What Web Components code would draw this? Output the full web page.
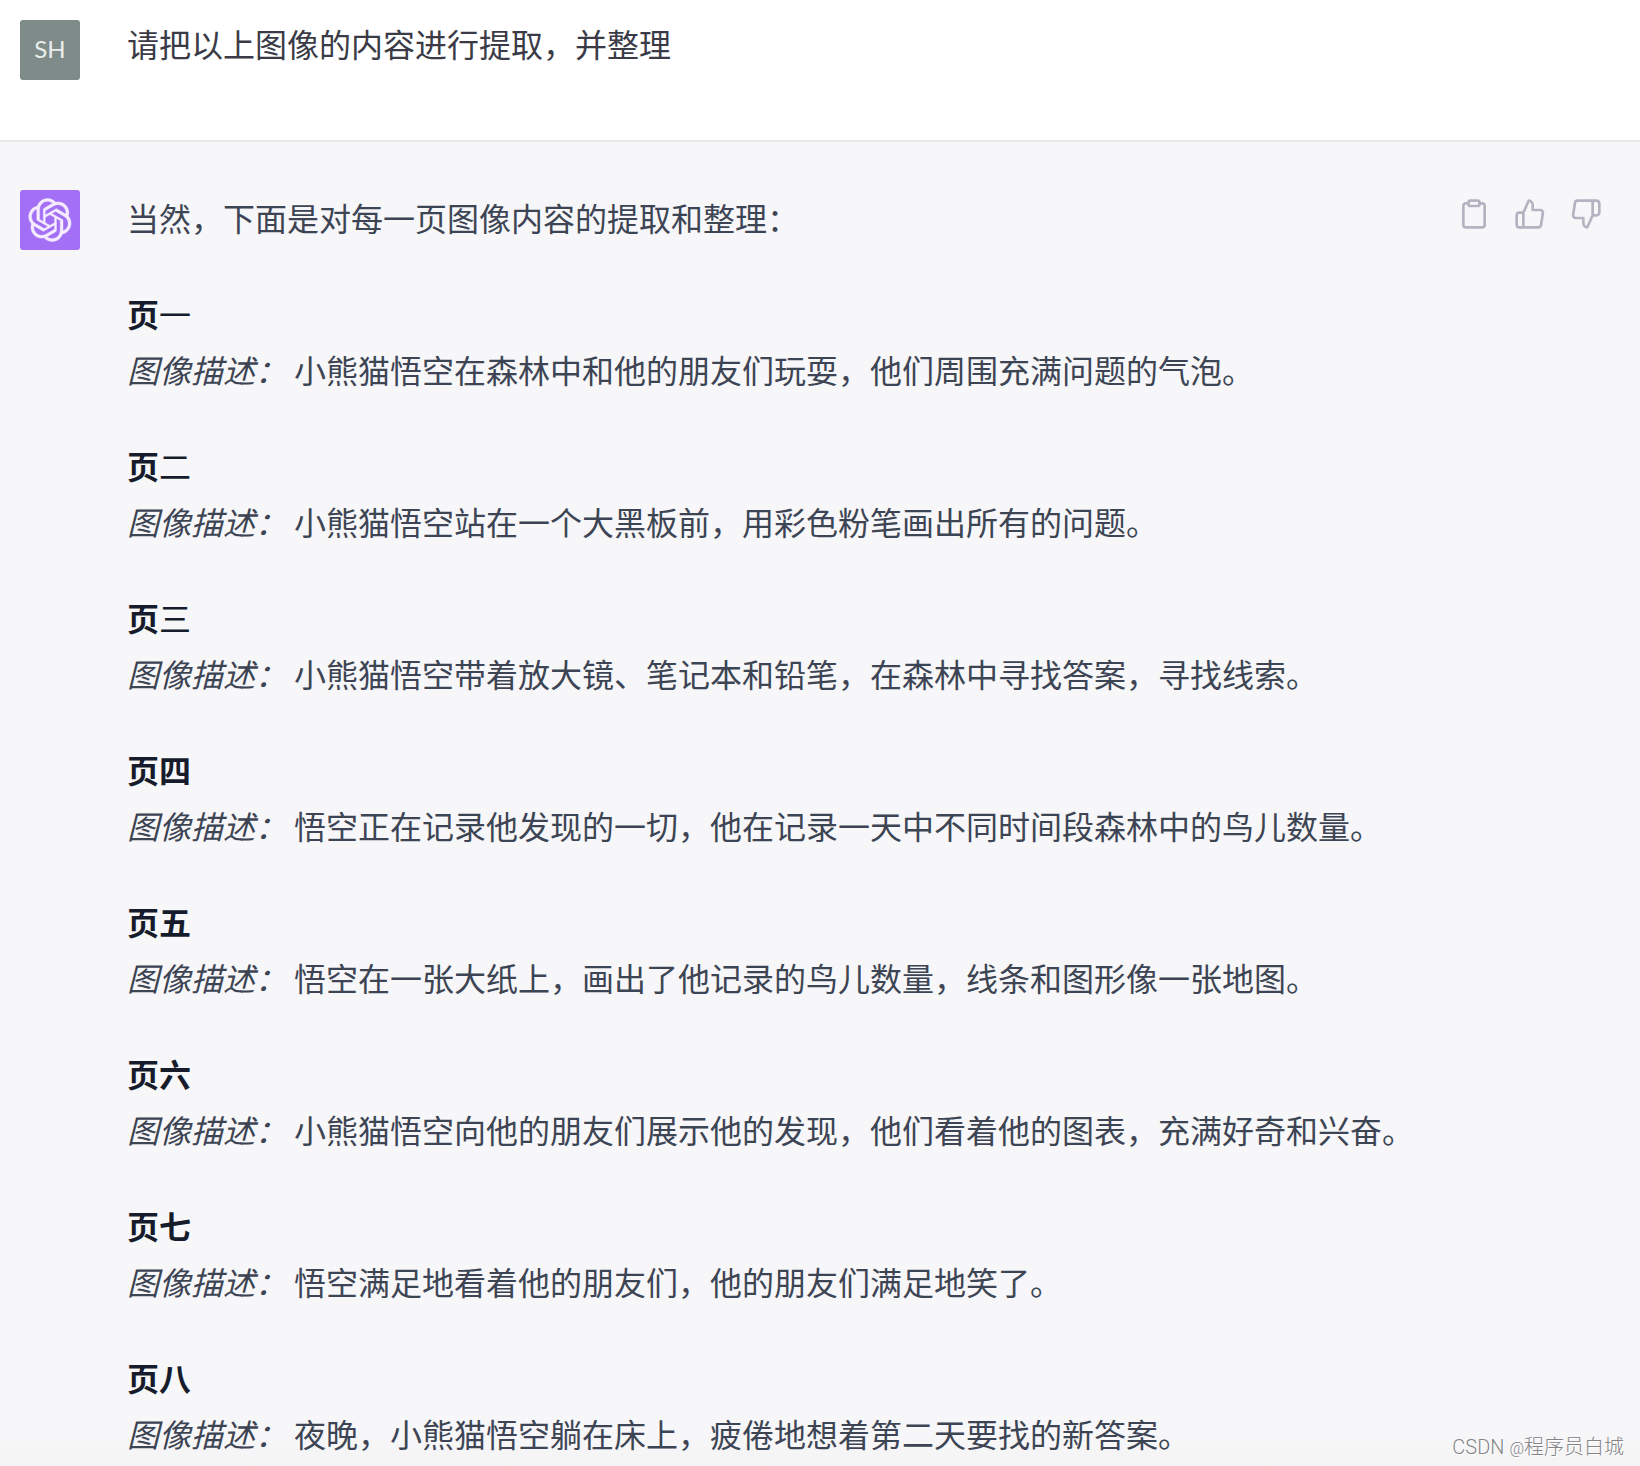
<!DOCTYPE html>
<html lang="zh-CN">
    <head>
        <meta charset="utf-8">
        <meta name="viewport" content="width=device-width, initial-scale=1.0">
        <title>chat thread</title>
        <style>
            html, body {
                margin: 0;
                height: 1466px;
                overflow: hidden;
                background: #f7f7f9;
            }

            body {
                position: relative;
                font-family: "Noto Sans CJK SC", sans-serif;
                font-size: 32px;
                line-height: 56px;
            }
        </style>
    </head>

    <body>
        <chat-message role="user">
            <chat-avatar slot="avatar">SH</chat-avatar>
            请把以上图像的内容进行提取，并整理
        </chat-message>

        <chat-message role="assistant">
            <chat-avatar slot="avatar" bot><chat-icon name="openai"></chat-icon></chat-avatar>
            <div>当然，下面是对每一页图像内容的提取和整理：</div>
            <page-note page="一" thin>小熊猫悟空在森林中和他的朋友们玩耍，他们周围充满问题的气泡。</page-note>
            <page-note page="二" thin>小熊猫悟空站在一个大黑板前，用彩色粉笔画出所有的问题。</page-note>
            <page-note page="三" thin>小熊猫悟空带着放大镜、笔记本和铅笔，在森林中寻找答案，寻找线索。</page-note>
            <page-note page="四">悟空正在记录他发现的一切，他在记录一天中不同时间段森林中的鸟儿数量。</page-note>
            <page-note page="五">悟空在一张大纸上，画出了他记录的鸟儿数量，线条和图形像一张地图。</page-note>
            <page-note page="六">小熊猫悟空向他的朋友们展示他的发现，他们看着他的图表，充满好奇和兴奋。</page-note>
            <page-note page="七">悟空满足地看着他的朋友们，他的朋友们满足地笑了。</page-note>
            <page-note page="八">夜晚，小熊猫悟空躺在床上，疲倦地想着第二天要找的新答案。</page-note>
            <chat-icon slot="actions" name="clipboard"></chat-icon>
            <chat-icon slot="actions" name="up"></chat-icon>
            <chat-icon slot="actions" name="down"></chat-icon>
        </chat-message>

        <water-mark>CSDN <small>@</small>程序员白城</water-mark>
    </body>

    <script>
        const icons = {
            clipboard: `<svg viewBox="0 0 24 24"><path d="M16 4h2a2 2 0 0 1 2 2v14a2 2 0 0 1-2 2H6a2 2 0 0 1-2-2V6a2 2 0 0 1 2-2h2"/><rect x="8" y="2" width="8" height="4" rx="1"/></svg>`,
            up: `<svg viewBox="0 0 24 24"><path d="M14 9V5a3 3 0 0 0-3-3l-4 9v11h11.28a2 2 0 0 0 2-1.7l1.38-9a2 2 0 0 0-2-2.3zM7 22H4a2 2 0 0 1-2-2v-7a2 2 0 0 1 2-2h3"/></svg>`,
            down: `<svg viewBox="0 0 24 24"><path d="M10 15v4a3 3 0 0 0 3 3l4-9V2H5.72a2 2 0 0 0-2 1.7l-1.38 9a2 2 0 0 0 2 2.3zm7-13h2.67A2.31 2.31 0 0 1 22 4v7a2.31 2.31 0 0 1-2.33 2H17"/></svg>`,
            openai: `<svg class="fill" viewBox="0 0 41 41"><path d="M37.5324 16.8707C37.9808 15.5241 38.1363 14.0974 37.9886 12.6859C37.8409 11.2744 37.3934 9.91076 36.676 8.68622C35.6126 6.83404 33.9882 5.3676 32.0373 4.4985C30.0864 3.62941 27.9098 3.40259 25.8215 3.85078C24.8796 2.7893 23.7219 1.94125 22.4257 1.36341C21.1295 0.785575 19.7249 0.491269 18.3058 0.500197C16.1708 0.495044 14.0893 1.16803 12.3614 2.42214C10.6335 3.67624 9.34853 5.44666 8.6917 7.47815C7.30085 7.76286 5.98686 8.3414 4.8377 9.17505C3.68854 10.0087 2.73073 11.0782 2.02839 12.312C0.956464 14.1591 0.498905 16.2988 0.721698 18.4228C0.944492 20.5467 1.83612 22.5449 3.268 24.1293C2.81966 25.4759 2.66413 26.9026 2.81182 28.3141C2.95951 29.7256 3.40701 31.0892 4.12437 32.3138C5.18791 34.1659 6.8123 35.6322 8.76321 36.5013C10.7141 37.3704 12.8907 37.5973 14.9789 37.1492C15.9208 38.2107 17.0786 39.0587 18.3747 39.6366C19.6709 40.2144 21.0755 40.5087 22.4946 40.4998C24.6307 40.5054 26.7133 39.8321 28.4418 38.5772C30.1704 37.3223 31.4556 35.5506 32.1119 33.5179C33.5027 33.2332 34.8167 32.6547 35.9659 31.821C37.115 30.9874 38.0728 29.9178 38.7752 28.684C39.8458 26.8371 40.3023 24.6979 40.0789 22.5748C39.8556 20.4517 38.9639 18.4544 37.5324 16.8707ZM22.4978 37.8849C20.7443 37.8874 19.0459 37.2733 17.6994 36.1501C17.7601 36.117 17.8666 36.0586 17.936 36.0161L25.9004 31.4156C26.1003 31.3019 26.2663 31.137 26.3813 30.9378C26.4964 30.7386 26.5563 30.5124 26.5549 30.2825V19.0542L29.9213 20.998C29.9389 21.0068 29.9541 21.0198 29.9656 21.0359C29.977 21.052 29.9842 21.0707 29.9867 21.0902V30.3889C29.9842 32.375 29.1946 34.2791 27.7909 35.6841C26.3872 37.0892 24.4838 37.8806 22.4978 37.8849ZM6.39227 31.0064C5.51397 29.4888 5.19742 27.7107 5.49804 25.9832C5.55718 26.0187 5.66048 26.0818 5.73461 26.1244L13.699 30.7248C13.8975 30.8408 14.1233 30.902 14.3532 30.902C14.583 30.902 14.8088 30.8408 15.0073 30.7248L24.731 25.1103V28.9979C24.7321 29.0177 24.7283 29.0376 24.7199 29.0556C24.7115 29.0736 24.6988 29.0893 24.6829 29.1012L16.6317 33.7497C14.9096 34.7416 12.8643 35.0097 10.9447 34.4954C9.02506 33.9811 7.38785 32.7263 6.39227 31.0064ZM4.29707 13.6194C5.17156 12.0998 6.55279 10.9364 8.19885 10.3327C8.19885 10.4013 8.19491 10.5228 8.19491 10.6071V19.808C8.19351 20.0378 8.25334 20.2638 8.36823 20.4629C8.48312 20.6619 8.64893 20.8267 8.84863 20.9404L18.5723 26.5542L15.206 28.4979C15.1894 28.5089 15.1703 28.5155 15.1505 28.5173C15.1307 28.5191 15.1107 28.516 15.0924 28.5082L7.04046 23.8557C5.32135 22.8601 4.06716 21.2235 3.55289 19.3046C3.03862 17.3858 3.30624 15.3413 4.29707 13.6194ZM31.955 20.0556L22.2312 14.4411L25.5976 12.4981C25.6142 12.4872 25.6333 12.4805 25.6531 12.4787C25.6729 12.4769 25.6928 12.4801 25.7111 12.4879L33.7631 17.1364C34.9967 17.849 36.0017 18.8982 36.6606 20.1613C37.3194 21.4244 37.6047 22.849 37.4832 24.2684C37.3617 25.6878 36.8382 27.0432 35.9743 28.1759C35.1103 29.3086 33.9415 30.1717 32.6047 30.6641C32.6047 30.5947 32.6047 30.4733 32.6047 30.3889V21.188C32.6066 20.9586 32.5474 20.7328 32.4332 20.5338C32.319 20.3348 32.154 20.1698 31.955 20.0556ZM35.3055 15.0128C35.2464 14.9765 35.1431 14.9142 35.069 14.8717L27.1045 10.2712C26.906 10.1554 26.6803 10.0943 26.4504 10.0943C26.2206 10.0943 25.9948 10.1554 25.7963 10.2712L16.0726 15.8858V11.9982C16.0715 11.9783 16.0753 11.9585 16.0837 11.9405C16.0921 11.9225 16.1048 11.9068 16.1207 11.8949L24.1719 7.25025C25.4053 6.53903 26.8158 6.19376 28.2383 6.25482C29.6608 6.31589 31.0364 6.78077 32.2044 7.59508C33.3723 8.40939 34.2842 9.53945 34.8334 10.8531C35.3826 12.1667 35.5464 13.6095 35.3055 15.0128ZM14.2424 21.9419L10.8752 19.9981C10.8576 19.9893 10.8423 19.9763 10.8309 19.9602C10.8195 19.9441 10.8122 19.9254 10.8098 19.9058V10.6071C10.8107 9.18295 11.2173 7.78848 11.9819 6.58696C12.7466 5.38544 13.8377 4.42659 15.1275 3.82264C16.4173 3.21869 17.8524 2.99464 19.2649 3.1767C20.6775 3.35876 22.0089 3.93941 23.1034 4.85067C23.0427 4.88379 22.937 4.94215 22.8668 4.98473L14.9024 9.58517C14.7025 9.69878 14.5366 9.86356 14.4215 10.0626C14.3065 10.2616 14.2466 10.4877 14.2479 10.7175L14.2424 21.9419ZM16.071 17.9991L20.4018 15.4978L24.7325 17.9975V22.9985L20.4018 25.4983L16.071 22.9985V17.9991Z"/></svg>`
        }

        class ChatIcon extends HTMLElement {
            constructor() {
                super()
                this.attachShadow({ mode: 'open' })
                this.shadowRoot.innerHTML = `
                <style>
                    :host { display: block; width: 32px; height: 32px; color: #b4b3c2; }
                    :host([name="openai"]) { width: 44px; height: 44px; color: #f6ecff; }
                    svg {
                        display: block;
                        width: 100%;
                        height: 100%;
                        fill: none;
                        stroke: currentColor;
                        stroke-width: 2;
                        stroke-linecap: round;
                        stroke-linejoin: round;
                    }
                    svg.fill { fill: currentColor; stroke-width: 0.4; }
                </style>
                ${icons[this.getAttribute('name')]}
                `
            }
        }

        class ChatAvatar extends HTMLElement {
            constructor() {
                super()
                this.attachShadow({ mode: 'open' })
                this.shadowRoot.innerHTML = `
                <style>
                    :host {
                        display: flex;
                        align-items: center;
                        justify-content: center;
                        width: 60px;
                        height: 60px;
                        border-radius: 3px;
                        background: #7f8b88;
                        color: #e9eeed;
                        font: 24px/58px Lato, sans-serif;
                    }
                    :host(:not([bot])) { align-items: flex-start; }
                    :host([bot]) { background: #a26ff5; }
                </style>
                <slot></slot>
                `
            }
        }

        class ChatMessage extends HTMLElement {
            constructor() {
                super()
                this.attachShadow({ mode: 'open' })
                this.shadowRoot.innerHTML = `
                <style>
                    :host {
                        display: flex;
                        align-items: flex-start;
                        box-sizing: border-box;
                        padding: 20px 38px 0 20px;
                        height: 142px;
                        background: #fff;
                        border-bottom: 2px solid #e8e8e9;
                        color: #3a3b46;
                    }
                    :host([role="assistant"]) {
                        height: 1324px;
                        padding-top: 48px;
                        background: linear-gradient(#f7f7f9 1290px, #f4f4f5);
                        border: 0;
                        color: #3d4554;
                    }
                    .content {
                        flex: 1;
                        display: flex;
                        flex-direction: column;
                        gap: 40px;
                        margin: -5px 0 0 47px;
                        white-space: nowrap;
                    }
                    :host([role="assistant"]) .content { margin-top: -1px; }
                    .actions {
                        display: flex;
                        gap: 24px;
                        padding-top: 8px;
                    }
                </style>
                <slot name="avatar"></slot>
                <div class="content"><slot></slot></div>
                <div class="actions"><slot name="actions"></slot></div>
                `
            }
        }

        class PageNote extends HTMLElement {
            constructor() {
                super()
                this.attachShadow({ mode: 'open' })
                this.shadowRoot.innerHTML = `
                <style>
                    :host { display: block; }
                    .title { color: #161c2b; font-weight: 700; }
                    :host([thin]) .number { font-weight: 400; }
                    em { margin-right: 7px; }
                </style>
                <div class="title">页<span class="number">${this.getAttribute('page')}</span></div>
                <div class="text"><em>图像描述：</em><slot></slot></div>
                `
            }
        }

        class WaterMark extends HTMLElement {
            constructor() {
                super()
                this.attachShadow({ mode: 'open' })
                this.shadowRoot.innerHTML = `
                <style>
                    :host {
                        position: absolute;
                        right: 16px;
                        bottom: 3px;
                        font: 300 20px/28px Roboto, "Noto Sans CJK SC", sans-serif;
                        color: #858587;
                        text-shadow: 1px 1px 0 #fff;
                        white-space: nowrap;
                    }
                    ::slotted(small) { font-size: 16px; }
                </style>
                <slot></slot>
                `
            }
        }

        customElements.define('chat-icon', ChatIcon)
        customElements.define('chat-avatar', ChatAvatar)
        customElements.define('chat-message', ChatMessage)
        customElements.define('page-note', PageNote)
        customElements.define('water-mark', WaterMark)
    </script>
</html>
